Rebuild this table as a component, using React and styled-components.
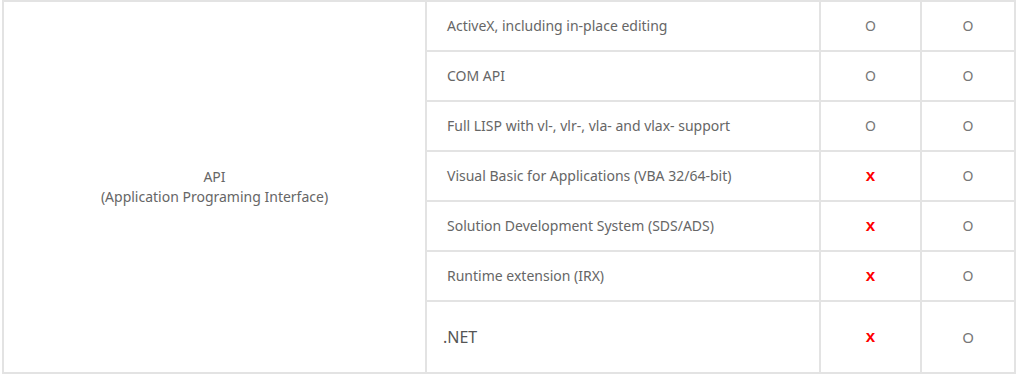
import React from 'react'
import styled, { createGlobalStyle } from 'styled-components'

const GlobalStyle = createGlobalStyle`
  body {
    margin: 0;
    background: #fff;
    font-family: "Noto Sans", "Liberation Sans", sans-serif;
  }
`

const Wrap = styled.div`
  padding: 0 2px 0 2px;
`

const Table = styled.table`
  width: 1012px;
  border-collapse: collapse;
  border-top: 2px solid #e3e3e3;
  border-bottom: 2px solid #e3e3e3;
  border-left: 1px solid #e3e3e3;
  border-right: 2px solid #e3e3e3;
  table-layout: fixed;
`

const Cell = styled.td`
  border: 2px solid #e3e3e3;
  height: ${({ tall }) => (tall ? '70px' : '48px')};
  padding: 0;
  font-size: 14px;
  color: #666;
  vertical-align: middle;
  text-align: ${({ align }) => align || 'center'};
  padding-left: ${({ indent }) => indent || 0};
  line-height: 20px;
`

const Feature = styled.span`
  font-size: ${({ big }) => (big ? '16px' : '14px')};
  color: ${({ big }) => (big ? '#555' : '#666')};
`

const Mark = styled.span`
  color: ${({ no }) => (no ? '#ff0000' : '#777')};
  font-weight: ${({ no }) => (no ? 700 : 400)};
  font-size: ${({ no, big }) => (no ? '17px' : big ? '15px' : '14px')};
  font-family: ${({ no }) => (no ? '"Liberation Sans", sans-serif' : 'inherit')};
`

const rows = [
  { name: 'ActiveX, including in-place editing', lt: true },
  { name: 'COM API', lt: true },
  { name: 'Full LISP with vl-, vlr-, vla- and vlax- support', lt: true },
  { name: 'Visual Basic for Applications (VBA 32/64-bit)', lt: false },
  { name: 'Solution Development System (SDS/ADS)', lt: false },
  { name: 'Runtime extension (IRX)', lt: false },
  { name: '.NET', lt: false, big: true },
]

export default function App() {
  return (
    <Wrap>
      <GlobalStyle />
      <Table>
        <colgroup>
          <col style={{ width: '423px' }} />
          <col style={{ width: '394px' }} />
          <col style={{ width: '101px' }} />
          <col style={{ width: '94px' }} />
        </colgroup>
        <tbody>
          {rows.map((r, i) => (
            <tr key={r.name}>
              {i === 0 && (
                <Cell rowSpan={rows.length}>
                  API
                  <br />
                  (Application Programing Interface)
                </Cell>
              )}
              <Cell tall={r.big} align="left" indent={r.big ? '16px' : '20px'}>
                <Feature big={r.big}>{r.name}</Feature>
              </Cell>
              <Cell tall={r.big}>
                <Mark no={!r.lt}>{r.lt ? 'O' : 'x'}</Mark>
              </Cell>
              <Cell tall={r.big}>
                <Mark big={r.big}>O</Mark>
              </Cell>
            </tr>
          ))}
        </tbody>
      </Table>
    </Wrap>
  )
}
